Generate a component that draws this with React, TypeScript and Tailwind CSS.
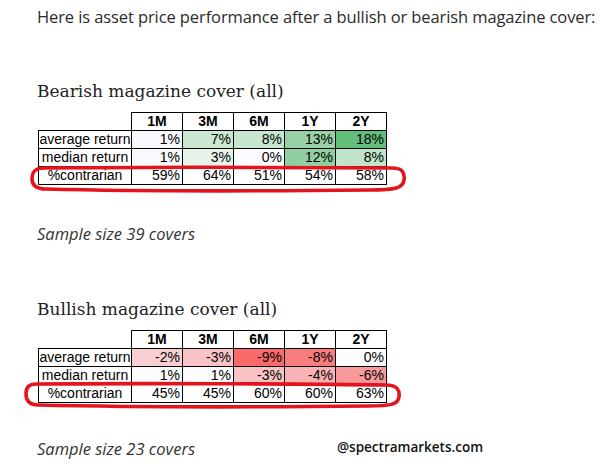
import React from 'react';

type Row = { label: string; cells: { v: string; bg: string }[] };

const cols = ['1M', '3M', '6M', '1Y', '2Y'];

const bearish: Row[] = [
    {
        label: 'average return',
        cells: [
            { v: '1%', bg: '#f8f9fc' },
            { v: '7%', bg: '#cbe8d3' },
            { v: '8%', bg: '#c6e6cf' },
            { v: '13%', bg: '#97d2a6' },
            { v: '18%', bg: '#63be7b' },
        ],
    },
    {
        label: 'median return',
        cells: [
            { v: '1%', bg: '#f8f9fc' },
            { v: '3%', bg: '#e6f4ea' },
            { v: '0%', bg: '#fcfcff' },
            { v: '12%', bg: '#90cf9f' },
            { v: '8%', bg: '#c0e4c9' },
        ],
    },
    {
        label: '%contrarian',
        cells: ['59%', '64%', '51%', '54%', '58%'].map((v) => ({ v, bg: '#ffffff' })),
    },
];

const bullish: Row[] = [
    {
        label: 'average return',
        cells: [
            { v: '-2%', bg: '#f9cfd1' },
            { v: '-3%', bg: '#f9c3c5' },
            { v: '-9%', bg: '#f8696b' },
            { v: '-8%', bg: '#f87d7f' },
            { v: '0%', bg: '#fcfcff' },
        ],
    },
    {
        label: 'median return',
        cells: [
            { v: '1%', bg: '#fcfcff' },
            { v: '1%', bg: '#fcfcff' },
            { v: '-3%', bg: '#f9c3c5' },
            { v: '-4%', bg: '#f9b3b5' },
            { v: '-6%', bg: '#f8999b' },
        ],
    },
    {
        label: '%contrarian',
        cells: ['45%', '45%', '60%', '60%', '63%'].map((v) => ({ v, bg: '#ffffff' })),
    },
];

function CoverTable({ rows, loopPath }: { rows: Row[]; loopPath: string }) {
    return (
        <div className="relative w-[349px]">
            <table className="table-fixed border-collapse text-black font-['Liberation_Sans',Arial,sans-serif] text-[14px] leading-[17px]">
                <colgroup>
                    <col className="w-[93px]" />
                    {cols.map((c) => (
                        <col key={c} className="w-[51px]" />
                    ))}
                </colgroup>
                <thead>
                    <tr className="h-[18px]">
                        <th className="border-0 p-0"></th>
                        {cols.map((c) => (
                            <th key={c} className="border border-black p-0 text-center text-[14px] font-bold">
                                {c}
                            </th>
                        ))}
                    </tr>
                </thead>
                <tbody>
                    {rows.map((row) => (
                        <tr key={row.label} className="h-[18px]">
                            <td className="border border-black p-0 text-center whitespace-nowrap">{row.label}</td>
                            {row.cells.map((cell, i) => (
                                <td
                                    key={i}
                                    className="border border-black py-0 pl-0 pr-[2px] text-right"
                                    style={{ backgroundColor: cell.bg }}
                                >
                                    {cell.v}
                                </td>
                            ))}
                        </tr>
                    ))}
                </tbody>
            </table>
            {/* hand-drawn red loop round the contrarian row */}
            <svg
                className="absolute left-[-14px] top-[50px] pointer-events-none"
                width="392"
                height="32"
                viewBox="0 0 392 32"
            >
                <path d={loopPath} fill="none" stroke="#e4141f" strokeWidth="3.6" strokeLinecap="round" />
            </svg>
        </div>
    );
}

export default function App() {
    return (
        <div className="w-[605px] h-[468px] bg-white overflow-hidden pl-[37px] pt-[6px] text-[#2b2b2b]">
            <p className="font-['Open_Sans',sans-serif] text-[16.5px] leading-[22px] whitespace-nowrap tracking-[-0.1px]">
                Here is asset price performance after a bullish or bearish magazine cover:
            </p>

            <h3 className="mt-[51px] font-['DejaVu_Serif',serif] text-[17px] leading-[24px] text-[#222]">
                Bearish magazine cover (all)
            </h3>
            <div className="mt-[9px] ml-[1px]">
                <CoverTable
                    rows={bearish}
                    loopPath="M 20 6 C 120 5, 300 5, 368 6 C 378 6, 381 10, 380 18 C 379 26, 372 28, 345 28 C 250 29, 100 29, 22 27 C 12 27, 8 23, 8 17 C 8 9, 12 6, 20 6"
                />
            </div>

            <p className="mt-[38px] font-['Open_Sans',sans-serif] italic text-[16.5px] leading-[22px] text-[#333]">
                Sample size 39 covers
            </p>

            <h3 className="mt-[52px] font-['DejaVu_Serif',serif] text-[17px] leading-[24px] text-[#222]">
                Bullish magazine cover (all)
            </h3>
            <div className="mt-[9px] ml-[1px]">
                <CoverTable
                    rows={bullish}
                    loopPath="M 12 4 C 120 3, 300 4, 362 5 C 373 5, 376 10, 375 17 C 374 24, 368 26, 345 26 C 250 27, 100 27, 14 25 C 5 25, 2 20, 2 14 C 2 7, 5 4, 12 4"
                />
            </div>

            <div className="mt-[35px] flex items-center">
                <p className="font-['Open_Sans',sans-serif] italic text-[16.5px] leading-[22px] text-[#333] w-[300px]">
                    Sample size 23 covers
                </p>
                <span className="font-['Open_Sans',sans-serif] font-semibold text-[13.5px] text-[#111] -mt-[4px]">
                    @spectramarkets.com
                </span>
            </div>
        </div>
    );
}
